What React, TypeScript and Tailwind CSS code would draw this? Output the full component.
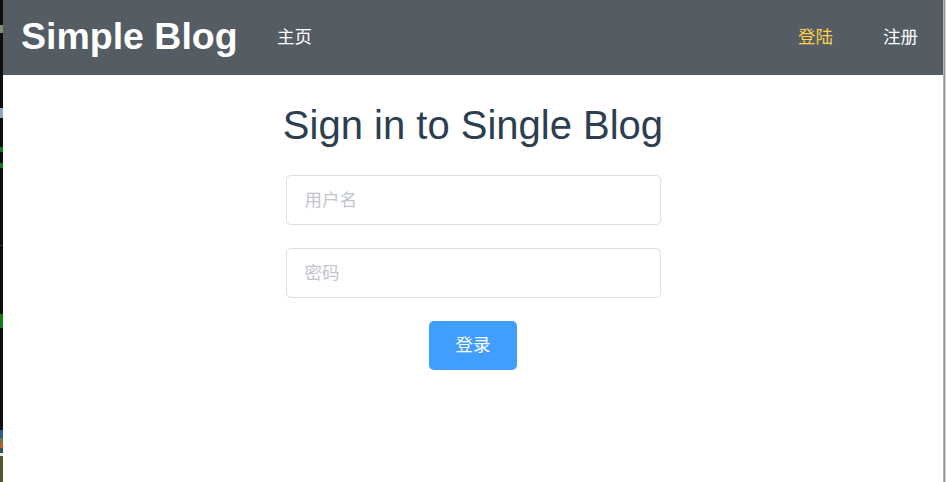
import React from "react";

const cjk = '"Liberation Sans", Arial, "Noto Sans CJK SC", sans-serif';

function LeftStrip() {
  return (
    <div className="flex w-[3px] shrink-0 flex-col bg-[#0e0e0e]">
      <div className="h-[25px]" />
      <div className="h-[8px] bg-[#7d8f6c]" />
      <div className="h-[75px]" />
      <div className="h-[10px] bg-[#8ea6c2]" />
      <div className="h-[29px]" />
      <div className="h-[5px] bg-[#0b7a10]" />
      <div className="h-[11px]" />
      <div className="h-[5px] bg-[#0b7a10]" />
      <div className="h-[77px]" />
      <div className="h-[1px] bg-[#3a3a3a]" />
      <div className="h-[68px]" />
      <div className="h-[14px] bg-[#167a1a]" />
      <div className="h-[102px]" />
      <div className="h-[8px] bg-[#2a5c9a]" />
      <div className="h-[6px] bg-[#6f7a3a]" />
      <div className="h-[4px] bg-[#c45a2a]" />
      <div className="h-[5px] bg-[#35505a]" />
      <div className="h-[3px] bg-[#e8e8e8]" />
      <div className="flex-1 bg-[#4b5a2a]" />
    </div>
  );
}

function RightStrip() {
  return (
    <div className="flex shrink-0">
      <div className="w-[1px] bg-[#b4b4b4]" />
      <div className="w-[1px] bg-[#909090]" />
      <div className="w-[1px] bg-[#d8d8d8]" />
    </div>
  );
}

export default function App() {
  return (
    <div
      className="flex h-[482px] w-[946px] overflow-hidden bg-white"
      style={{ fontFamily: cjk }}
    >
      <LeftStrip />
      <div className="flex w-[940px] shrink-0 flex-col">
        <header className="flex h-[75px] shrink-0 items-start bg-[#545c64]">
          <div className="w-[249px] shrink-0 pl-[18px] text-[37.5px] font-bold leading-[73px] text-white">
            Simple Blog
          </div>
          <nav className="flex flex-1 items-start">
            <a className="px-[25px] text-[17.5px] leading-[74px] text-white">主页</a>
            <div className="flex-1" />
            <a className="px-[25px] text-[17.5px] leading-[74px] text-[#ffd04b]">登陆</a>
            <a className="px-[25px] text-[17.5px] leading-[74px] text-white">注册</a>
          </nav>
        </header>
        <main className="flex flex-col items-center">
          <h1 className="mt-[27px] text-[40px] font-normal leading-[46px] text-[#2c3e50]">
            Sign in to Single Blog
          </h1>
          <input
            className="mt-[27px] h-[50px] w-[375px] rounded-[5px] border border-[#dcdfe6] px-[18px] text-[17.5px] text-[#606266] outline-none placeholder:text-[#c0c4cc]"
            placeholder="用户名"
          />
          <input
            type="password"
            className="mt-[23px] h-[50px] w-[375px] rounded-[5px] border border-[#dcdfe6] px-[18px] text-[17.5px] text-[#606266] outline-none placeholder:text-[#c0c4cc]"
            placeholder="密码"
          />
          <button className="mt-[23px] flex h-[49px] w-[88px] items-center justify-center rounded-[5px] bg-[#409eff] text-[17.5px] text-white">
            登录
          </button>
        </main>
      </div>
      <RightStrip />
    </div>
  );
}
